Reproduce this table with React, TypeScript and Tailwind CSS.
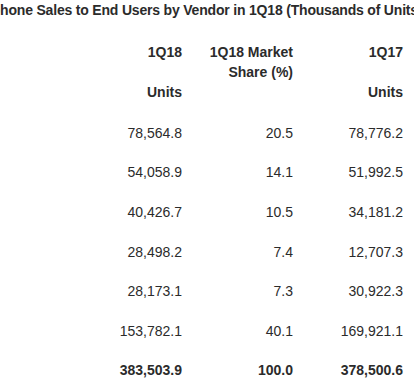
import React from "react";

const rows: [string, string, string][] = [
  ["78,564.8", "20.5", "78,776.2"],
  ["54,058.9", "14.1", "51,992.5"],
  ["40,426.7", "10.5", "34,181.2"],
  ["28,498.2", "7.4", "12,707.3"],
  ["28,173.1", "7.3", "30,922.3"],
  ["153,782.1", "40.1", "169,921.1"],
];

export default function App() {
  return (
    <div
      className="w-[414px] h-[384px] overflow-hidden bg-white text-[#2b2b2b] text-[14px] leading-[20px]"
      style={{ fontFamily: '"Liberation Sans", Arial, sans-serif' }}
    >
      <div className="pt-[0px] h-[41px] whitespace-nowrap font-bold ml-[-47px] tracking-[-0.19px]">
        Smartphone Sales to End Users by Vendor in 1Q18 (Thousands of Units)
      </div>
      <div className="flex font-bold pt-[1px]">
        <div className="w-[182px] text-right">
          <div>1Q18</div>
          <div>&nbsp;</div>
          <div>Units</div>
        </div>
        <div className="w-[111px] text-right">
          <div>1Q18 Market</div>
          <div>Share (%)</div>
        </div>
        <div className="w-[110px] text-right">
          <div>1Q17</div>
          <div>&nbsp;</div>
          <div>Units</div>
        </div>
      </div>
      <div className="mt-[11px]">
        {rows.map((r, i) => (
          <div key={i} className="flex h-[39.6px] items-center">
            <div className="w-[182px] text-right">{r[0]}</div>
            <div className="w-[111px] text-right">{r[1]}</div>
            <div className="w-[110px] text-right">{r[2]}</div>
          </div>
        ))}
        <div className="flex h-[39.6px] items-center font-bold">
          <div className="w-[182px] text-right">383,503.9</div>
          <div className="w-[111px] text-right">100.0</div>
          <div className="w-[110px] text-right">378,500.6</div>
        </div>
      </div>
    </div>
  );
}
